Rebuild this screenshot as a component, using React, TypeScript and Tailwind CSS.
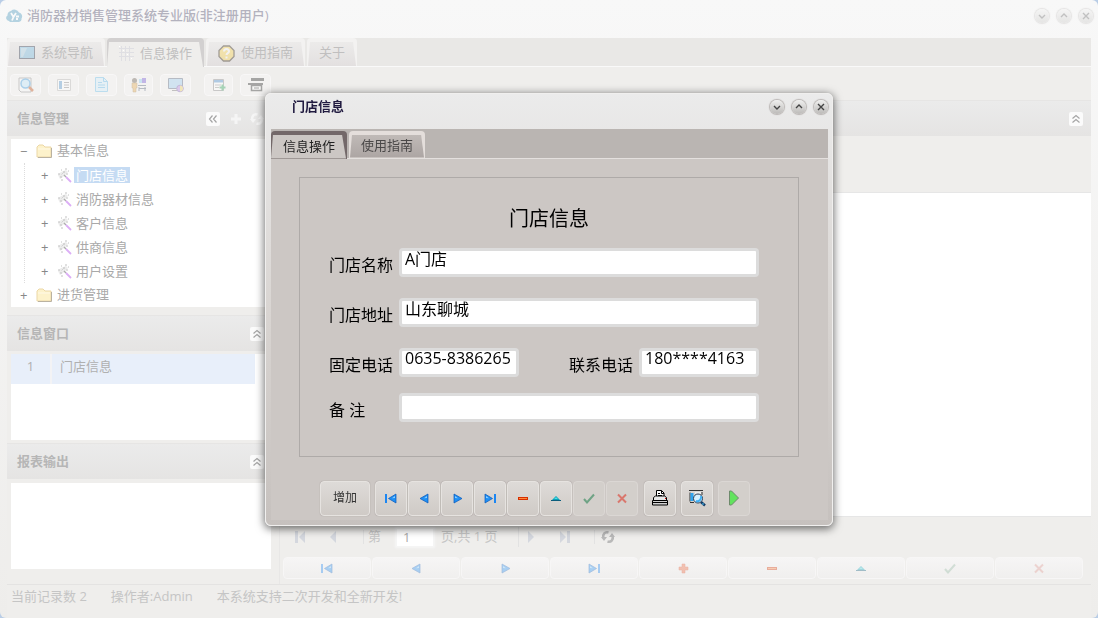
import { type ReactNode } from "react";

/* ================= DATA ================= */

const treeItems = ["门店信息", "消防器材信息", "客户信息", "供商信息", "用户设置"];

type NavIcon = "first" | "prev" | "next" | "last" | "add" | "remove" | "up" | "check" | "cross";

const gridNav: { icon: NavIcon; label: string; off?: boolean }[] = [
  { icon: "first", label: "首条" },
  { icon: "prev", label: "上一条" },
  { icon: "next", label: "下一条" },
  { icon: "last", label: "末条" },
  { icon: "add", label: "添加" },
  { icon: "remove", label: "删除" },
  { icon: "up", label: "编辑" },
  { icon: "check", label: "保存", off: true },
  { icon: "cross", label: "取消", off: true },
];

const dialogNav = gridNav.filter((n) => n.icon !== "add");

/* ================= ICONS ================= */

function NavGlyph({ icon }: { icon: NavIcon }) {
  return (
    <svg width="14" height="14" viewBox="0 0 14 14">
      {icon === "first" && (
        <>
          <path d="M1 3h2v9H1z" fill="#1c86f2" />
          <path d="M12 3v9L4.500 7.500z" fill="#1e8ff5" stroke="#0a58b8" strokeWidth=".7" />
          <path d="M11 5v2L8 7.200z" fill="#8ed0ff" />
        </>
      )}
      {icon === "prev" && (
        <>
          <path d="M11 3v9L3 7.500z" fill="#1e8ff5" stroke="#0a58b8" strokeWidth=".7" />
          <path d="M10 5v2L7 7.200z" fill="#8ed0ff" />
        </>
      )}
      {icon === "next" && (
        <>
          <path d="M4 3v9l8-4.500z" fill="#1e8ff5" stroke="#0a58b8" strokeWidth=".7" />
          <path d="M5 5v2l3 .2z" fill="#8ed0ff" />
        </>
      )}
      {icon === "last" && (
        <>
          <path d="M2 3v9l7.500-4.500z" fill="#1e8ff5" stroke="#0a58b8" strokeWidth=".7" />
          <path d="M3 5v2l3 .2z" fill="#8ed0ff" />
          <path d="M11 3h2v9h-2z" fill="#1c86f2" />
        </>
      )}
      {icon === "add" && <path d="M6 3h3v3h3v3H9v3H6V9H3V6h3z" fill="#f0653a" stroke="#d83a10" strokeWidth=".5" />}
      {icon === "remove" && (
        <>
          <path d="M2 6h10v3H2z" fill="#d62f00" />
          <path d="M3 7h8v1H3z" fill="#ff8a3c" />
        </>
      )}
      {icon === "up" && (
        <>
          <path d="M2 10l5-5 5 5z" fill="#06a2b8" />
          <path d="M2 9.500h10" stroke="#0b5d7c" />
          <path d="M5 8l2-2 2 2z" fill="#4fdbe4" />
        </>
      )}
      {icon === "check" && <path d="M2 8l3 3.500L12 3.500" fill="none" stroke="#6fa385" strokeWidth="2" />}
      {icon === "cross" && <path d="M3 3.500l8 8M11 3.500l-8 8" fill="none" stroke="#d9776d" strokeWidth="2" />}
    </svg>
  );
}

function LogoIcon() {
  return (
    <svg width="17" height="16" viewBox="0 0 17 16" className="opacity-40">
      <path d="M3 13a3 3 0 01-1.500-5.500A4 4 0 015 3a5 5 0 018 1.500 4 4 0 012.500 6A3 3 0 0113 14H4z" fill="#4f9cc0" />
      <path d="M5 5l2.500 4L10 5M7.500 9L6 12.500M10 8.500h3M10 11h2" stroke="#fff" strokeWidth="1.800" fill="none" />
    </svg>
  );
}

function MonitorIcon() {
  return (
    <svg width="16" height="14" viewBox="0 0 16 14" className="opacity-45">
      <rect x=".5" y=".5" width="15" height="12" fill="#8cc8e8" stroke="#4c5566" />
      <path d="M2 2h6l-4 9H2z" fill="#b8dcee" />
    </svg>
  );
}

function GridIcon() {
  return (
    <svg width="15" height="15" viewBox="0 0 15 15">
      <path d="M2.500 0v15M6.500 0v15M10.500 0v15M0 2.500h15M0 6.500h15M0 10.500h15" stroke="#dfdfe3" />
      <path d="M0 0h1v1H0zM4 4h1v1H4zM8 8h1v1H8zM12 12h1v1h-1z" fill="#fff" />
    </svg>
  );
}

function HelpIcon() {
  return (
    <svg width="17" height="17" viewBox="0 0 17 17" className="opacity-45">
      <path d="M5.500 1h6L16 5.500v6L11.500 16h-6L1 11.500v-6z" fill="#fcdc68" stroke="#4d4436" strokeWidth="1.300" />
      <path d="M6 6.500a2.500 2.500 0 115 0c0 1.600-2.500 1.600-2.500 3.500M8.500 11.500v2" stroke="#fff" strokeWidth="2" fill="none" />
    </svg>
  );
}

const toolIcons: { label: string; width: string; art: ReactNode }[] = [
  {
    label: "查找",
    width: "w-[31px]",
    art: (
      <>
        <path d="M1 1h12v14H3l-2-2z" fill="#fafafa" stroke="#8a8a8a" />
        <circle cx="7.500" cy="6.500" r="4.500" fill="#bfe6fb" stroke="#3f9ce0" strokeWidth="1.500" />
        <path d="M11 10l4 4" stroke="#c2551f" strokeWidth="2.500" />
      </>
    ),
  },
  {
    label: "列表",
    width: "w-[31px]",
    art: (
      <>
        <path d="M1.500 2.500h13v11h-13z" fill="#fff" stroke="#b5b5b5" />
        <path d="M3 4h3v8H3z" fill="#5a9ad0" />
        <path d="M8 5.500h5M8 8h5M8 10.500h5" stroke="#8b8b8b" />
      </>
    ),
  },
  {
    label: "文档",
    width: "w-[31px]",
    art: (
      <>
        <path d="M1.500.5h8l4 4v10h-12z" fill="#d5effc" stroke="#6cc0ec" />
        <path d="M9.500.500v4h4M4 5.500h4M4 8h7M4 10.500h7" stroke="#5fb8ea" fill="none" />
      </>
    ),
  },
  {
    label: "人员",
    width: "w-[29px]",
    art: (
      <>
        <circle cx="3.500" cy="3.500" r="2.500" fill="#6d6257" />
        <path d="M1 6h5v5H5v4H2v-4H1z" fill="#e5ae58" stroke="#9c7534" strokeWidth=".5" />
        <path d="M8 2h3v4H8z" fill="#8fcdf0" />
        <path d="M11 1h4v5h-4z" fill="#7a5fd8" />
        <path d="M7 8.500h8M8 11.500h7M8 10v4M14 10v4" stroke="#5a6a80" />
      </>
    ),
  },
  {
    label: "屏幕",
    width: "w-[31px]",
    art: (
      <>
        <path d="M.5 1.500h14v10H.5z" fill="#9fcff0" stroke="#5c6b82" />
        <path d="M4 13.500h6" stroke="#7a7a7a" />
        <circle cx="12" cy="11.500" r="3.300" fill="#b88ae0" stroke="#7c64b4" />
        <path d="M12 8.500a3 3 0 010 6z" fill="#efd56a" />
      </>
    ),
  },
  {
    label: "导出",
    width: "w-[29px]",
    art: (
      <>
        <path d="M2.500 2.500h10v11h-10z" fill="#fff" stroke="#8c8c8c" />
        <path d="M3 3h9v2.500H3z" fill="#4d91cf" />
        <path d="M4 8h6M4 10.500h4" stroke="#999" />
        <path d="M11.500 7.500v6M8.500 10.500h6" stroke="#35a862" strokeWidth="2" />
      </>
    ),
  },
  {
    label: "打印",
    width: "w-[31px]",
    art: (
      <>
        <path d="M3 1h13v3H3zM0 6h15v2H0z" fill="#333" />
        <path d="M3.500 8.500h10v5h-10z" fill="#fff" stroke="#333" strokeWidth="1.500" />
        <path d="M6 11h5" stroke="#333" />
      </>
    ),
  },
];

function FolderIcon() {
  return (
    <svg width="17" height="15" viewBox="0 0 17 15" className="opacity-60">
      <path d="M1 3l2-2h4l2 2h6v10H1z" fill="#fdebaa" stroke="#e0bd6c" />
      <path d="M2 13.500h13.500V4" stroke="#8d8064" fill="none" />
      <path d="M2 5h12" stroke="#fff6d6" />
    </svg>
  );
}

function WandIcon() {
  return (
    <svg width="15" height="15" viewBox="0 0 15 15">
      <path d="M4 4l5-2 2 2-5 5-3 2-2-4z" fill="#ececec" />
      <path d="M4 2h1M8 1h2M11 3h1M1 6h2M3 9h2M4 12h2M6 4h2M9 6h2" stroke="#c2c2c2" />
      <path d="M4.500 6.500l3-3" stroke="#d2d2d2" />
      <path d="M7 7l2 2" stroke="#adadad" strokeWidth="1.500" />
      <path d="M9 9l5 5" stroke="#dcaef6" strokeWidth="1.800" />
    </svg>
  );
}

function ChevronsIcon({ left }: { left?: boolean }) {
  return (
    <svg width="10" height="10" viewBox="0 0 10 10" fill="none" stroke="#a5a5a5" strokeWidth="1.200">
      {left ? <path d="M4.500 1.500L1.500 5l3 3.500M8.500 1.500L5.500 5l3 3.500" /> : <path d="M1.500 4.500L5 1.500l3.500 3M1.500 8.500L5 5.500l3.500 3" />}
    </svg>
  );
}

function RefreshIcon({ color }: { color: string }) {
  return (
    <svg width="14" height="14" viewBox="0 0 14 14" fill="none" stroke={color} strokeWidth="2.600">
      <path d="M7.500 2.500C4 1.500 1.500 4 2.300 8M6.500 11.500c3.500 1 6-1.500 5.200-5.500" />
      <path d="M0 7h6L3 11zM14 7H8l3-4z" fill={color} stroke="none" />
    </svg>
  );
}

/* ================= SHARED PARTS ================= */

function WindowButtons({ faded }: { faded?: boolean }) {
  const paths = [
    { label: "最小化", d: "M4 6l3 3 3-3" },
    { label: "最大化", d: "M4 8l3-3 3 3" },
    { label: "关闭", d: "M4 4l6 6M10 4l-6 6" },
  ];
  return (
    <div className={faded ? "flex gap-2 opacity-30" : "flex gap-2"}>
      {paths.map((p) => (
        <button
          key={p.label}
          type="button"
          aria-label={p.label}
          className="size-3.5 rounded-full bg-linear-to-b from-[#f0f0ef] to-[#bcbab8] shadow-[0_0_1px_1px_#b9b5b3]"
        >
          <svg width="14" height="14" viewBox="0 0 14 14" fill="none" stroke="#444" strokeWidth="1.400">
            <path d={p.d} />
          </svg>
        </button>
      ))}
    </div>
  );
}

function PanelHeader({ title, children }: { title: string; children?: ReactNode }) {
  return (
    <div className="flex h-9 shrink-0 items-center border-t border-[#e6e5e4] bg-linear-to-b from-[#ebebeb] to-[#e5e4e3] pr-2 pl-2.5">
      <h2 className="text-[13px] font-bold text-[#b6b6b6]">{title}</h2>
      <div className="ml-auto flex items-center gap-2">{children}</div>
    </div>
  );
}

function CollapseButton({ left }: { left?: boolean }) {
  return (
    <button type="button" aria-label="折叠" className="flex size-3.5 items-center justify-center rounded-xs bg-[#fbfbfb]">
      <ChevronsIcon left={left} />
    </button>
  );
}

function MainTab({ label, icon, active }: { label: string; icon?: ReactNode; active?: boolean }) {
  return (
    <button
      type="button"
      className={
        active
          ? "relative -mb-px h-[29px] rounded-t bg-[#d2d0d0] px-3"
          : "relative h-7 rounded-t bg-[#f3f2f1] px-3"
      }
    >
      <span
        className={
          active
            ? "absolute inset-0 top-1 bg-[#efeeec] [clip-path:polygon(2px_0,calc(100%-5px)_0,calc(100%-1px)_100%,0_100%)]"
            : "absolute inset-0 top-1 bg-linear-to-b from-[#ecebea] to-[#e3e0e0] [clip-path:polygon(3px_0,calc(100%-4px)_0,calc(100%-1px)_100%,1px_100%)]"
        }
      />
      <span className="relative flex items-center gap-1.5 pt-0.5 text-[13px] text-[#c0bfbf]">
        {icon}
        {label}
      </span>
    </button>
  );
}

function DialogTab({ label, active }: { label: string; active?: boolean }) {
  return (
    <button
      type="button"
      className={
        active
          ? "relative -mb-px h-7 rounded-t bg-[#736869] px-3"
          : "relative h-[27px] rounded-t bg-[#e4dedb] px-3"
      }
    >
      <span
        className={
          active
            ? "absolute inset-0 top-1 bg-[#ccc7c4] [clip-path:polygon(2px_0,calc(100%-5px)_0,calc(100%-1px)_100%,0_100%)]"
            : "absolute inset-0 top-1 bg-linear-to-b from-[#c0bab7] to-[#aca5a3] [clip-path:polygon(3px_0,calc(100%-4px)_0,calc(100%-1px)_100%,1px_100%)]"
        }
      />
      <span className={active ? "relative text-[13px] text-[#222]" : "relative text-[13px] text-[#4a4848]"}>{label}</span>
    </button>
  );
}

function Field({ id, label, value, short }: { id: string; label: string; value?: string; short?: boolean }) {
  return (
    <div className={short ? "flex" : "flex flex-1"}>
      <label htmlFor={id} className="w-[70px] shrink-0 pt-[5px] text-base leading-6 whitespace-pre">
        {label}
      </label>
      <input
        id={id}
        type="text"
        defaultValue={value}
        className={
          short
            ? "h-[29px] w-[120px] rounded border-[3px] border-[#dcdcdc] bg-white px-[3px] pb-[9px] text-base leading-[17px] outline-none"
            : "h-[29px] min-w-0 flex-1 rounded border-[3px] border-[#dcdcdc] bg-white px-[3px] pb-[9px] text-base leading-[17px] outline-none"
        }
      />
    </div>
  );
}

function DialogButton({ label, off, children }: { label: string; off?: boolean; children: ReactNode }) {
  return (
    <button
      type="button"
      aria-label={label}
      className={
        off
          ? "flex h-[35px] w-8 items-center justify-center rounded border border-[#dbd7d4] bg-[#d3cfcb]"
          : "flex h-[35px] w-8 items-center justify-center rounded border border-[#e6e3e0] bg-linear-to-b from-[#dedbd8] to-[#cfcac6] shadow-[0_0_1px_#8f8a87]"
      }
    >
      {children}
    </button>
  );
}

/* ================= SIDEBAR ================= */

function Sidebar() {
  return (
    <aside className="flex w-[268px] shrink-0 flex-col pr-[3px]">
      <PanelHeader title="信息管理">
        <CollapseButton left />
        <button type="button" aria-label="新增" className="ml-0.5 size-3">
          <svg width="12" height="12" viewBox="0 0 12 12">
            <path d="M6 1v10M1 6h10" stroke="#f5f5f5" strokeWidth="3" />
          </svg>
        </button>
        <button type="button" aria-label="刷新">
          <RefreshIcon color="#f5f5f5" />
        </button>
      </PanelHeader>
      <div className="mt-[3px] mr-px ml-1 bg-white text-[13px] text-[#a9a9a9]">
        <ul className="ml-[13px]">
          <li>
            <div className="-ml-1 flex h-6 items-center">
              <span className="w-4 shrink-0 leading-none text-[#888]">−</span>
              <FolderIcon />
              <span className="ml-1">基本信息</span>
            </div>
            <ul className="border-l border-dotted border-[#ddd] pl-4">
              {treeItems.map((item, i) => (
                <li key={item} className="flex h-6 items-center">
                  <span className="w-4 shrink-0 leading-none text-[#888]">+</span>
                  <WandIcon />
                  <span className={i === 0 ? "ml-0.5 bg-[#c5dbf3] px-0.5 leading-4 text-white" : "ml-0.5 px-0.5 leading-4"}>
                    {item}
                  </span>
                </li>
              ))}
            </ul>
          </li>
          <li className="-ml-1 flex h-6 items-center">
            <span className="w-4 shrink-0 leading-none text-[#888]">+</span>
            <FolderIcon />
            <span className="ml-1">进货管理</span>
          </li>
        </ul>
      </div>

      <div className="mt-2">
        <PanelHeader title="信息窗口">
          <CollapseButton />
        </PanelHeader>
      </div>
      <div className="mt-[3px] mr-px ml-1 min-h-[86px] bg-white pr-4">
        <table className="w-full border-collapse text-[13px] text-[#b0b0b0]">
          <tbody>
            <tr className="h-[30px] bg-[#e8effa]">
              <td className="w-10 border-r-2 border-[#f3f3f5] pb-1 text-center">1</td>
              <td className="pb-1 pl-2">门店信息</td>
            </tr>
          </tbody>
        </table>
      </div>

      <div className="mt-[3px]">
        <PanelHeader title="报表输出">
          <CollapseButton />
        </PanelHeader>
      </div>
      <div className="mt-1 mr-px mb-[15px] ml-1 min-h-[84px] flex-1 bg-white" />
    </aside>
  );
}

/* ================= DATA PANEL ================= */

function DataPanel() {
  return (
    <section className="ml-1 flex min-w-0 flex-1 flex-col border-l border-[#e8e7e6]">
      <PanelHeader title="">
        <CollapseButton />
      </PanelHeader>
      <div className="h-14 shrink-0" />
      <div className="flex-1 border-y border-[#e6e6e6] bg-white" />

      <div className="flex h-10 shrink-0 items-center pl-3 text-[13px] text-[#c6c6c6]">
        <button type="button" aria-label="首页" className="w-8">
          <svg width="14" height="14" viewBox="0 0 14 14" fill="#d4d7de"><path d="M3 1h3v12H3zM13 1v12L7 7z" /></svg>
        </button>
        <button type="button" aria-label="上一页" className="w-10 border-r border-[#e2e2e2] pl-1">
          <svg width="14" height="14" viewBox="0 0 14 14" fill="#d4d7de"><path d="M8 1v12L2 7z" /></svg>
        </button>
        <label htmlFor="page" className="pr-4 pl-1">第</label>
        <input id="page" defaultValue="1" className="w-9 bg-white px-1.5 leading-[17px] text-[#aaa] shadow-[0_0_2px_2px_#f6f6f6] outline-none" />
        <span className="ml-2 w-[78px] border-r border-[#e2e2e2]">页,共 1 页</span>
        <button type="button" aria-label="下一页" className="w-8 pl-2">
          <svg width="14" height="14" viewBox="0 0 14 14" fill="#d4d7de"><path d="M1 1v12l6-6z" /></svg>
        </button>
        <button type="button" aria-label="末页" className="w-11 border-r border-[#e2e2e2] pl-2">
          <svg width="14" height="14" viewBox="0 0 14 14" fill="#d4d7de"><path d="M1 1v12l6-6zM8 1h3v12H8z" /></svg>
        </button>
        <button type="button" aria-label="刷新列表" className="ml-1.5">
          <RefreshIcon color="#b9b9b9" />
        </button>
      </div>

      <div className="mr-2 mb-[5px] ml-[3px] grid grid-cols-9 gap-px">
        {gridNav.map((n) => (
          <button
            key={n.icon}
            type="button"
            aria-label={n.label}
            className="flex h-[22px] items-center justify-center rounded border border-[#f7f6f6] bg-linear-to-b from-[#f6f5f5] to-[#f0efee]"
          >
            <span className={n.off ? "opacity-25" : "opacity-35"}>
              <NavGlyph icon={n.icon} />
            </span>
          </button>
        ))}
      </div>
    </section>
  );
}

/* ================= DIALOG ================= */

function StoreDialog() {
  return (
    <div className="fixed inset-0 flex items-center justify-center">
      <div
        role="dialog"
        aria-label="门店信息"
        className="w-full max-w-[568px] rounded-md border border-[#f0efee] bg-linear-to-b from-[#ebebeb] via-[#d9d5d2] to-[#c6c1be] pr-1 pb-[5px] pl-[5px] shadow-[0_2px_8px_1px_rgba(0,0,0,0.55)]"
      >
        <div className="flex h-[35px] items-center pb-2 pl-[21px]">
          <h2 className="text-[13px] font-bold text-[#211b40]">门店信息</h2>
          <div className="ml-auto">
            <WindowButtons />
          </div>
        </div>

        <div className="flex h-[30px] items-end gap-0.5 border-b border-[#e4e0de] bg-[#bab5b2]">
          <DialogTab label="信息操作" active />
          <DialogTab label="使用指南" />
        </div>

        <form className="bg-[#ccc7c4] pt-[18px] pr-[29px] pb-1 pl-7" onSubmit={(e) => e.preventDefault()}>
          <div className="border border-[#aeaaa8] pt-[27px] pr-[39px] pb-[34px] pl-[29px] text-black">
            <h3 className="mb-[15px] pl-2.5 text-center text-xl leading-7">门店信息</h3>
            <div className="mb-[21px] flex">
              <Field id="name" label="门店名称" value="A门店" />
            </div>
            <div className="mb-[21px] flex">
              <Field id="address" label="门店地址" value="山东聊城" />
            </div>
            <div className="mb-4 flex justify-between">
              <Field id="tel" label="固定电话" value="0635-8386265" short />
              <Field id="mobile" label="联系电话" value="180****4163" short />
            </div>
            <div className="flex">
              <Field id="memo" label="备 注" />
            </div>
          </div>

          <div className="mt-6 flex gap-[5px] pl-[21px]">
            <button
              type="button"
              className="h-[35px] w-[50px] rounded border border-[#e6e3e0] bg-linear-to-b from-[#dedbd8] to-[#cfcac6] text-xs text-[#333] shadow-[0_0_1px_#8f8a87]"
            >
              增加
            </button>
            <div className="mr-px flex gap-px">
              {dialogNav.map((n) => (
                <DialogButton key={n.icon} label={n.label} off={n.off}>
                  <NavGlyph icon={n.icon} />
                </DialogButton>
              ))}
            </div>
            <DialogButton label="打印">
              <svg width="16" height="16" viewBox="0 0 16 16">
                <path d="M4.500 7V.5h5l2.500 2.500v4" fill="#fff" stroke="#000" />
                <path d="M9.500.5v3H12M6 3.500h2M6 5.500h4" stroke="#000" fill="none" />
                <path d="M1.500 7.500L3.500 6h9l2 1.500v3h-13z" fill="#e8e8e8" stroke="#000" />
                <path d="M.5 10.500h15v4.500H.5z" fill="#d0d0d0" stroke="#000" />
                <path d="M1 12.500h14" stroke="#000" />
                <path d="M13 8.500h1" stroke="#d00" />
              </svg>
            </DialogButton>
            <DialogButton label="预览">
              <svg width="18" height="18" viewBox="0 0 18 18">
                <path d="M1 1.500h14M2 3.500v9M14 3v3M2 13.500h4" stroke="#333" />
                <path d="M2.500 4h3v8h-3z" fill="#2fa4f0" />
                <path d="M7 4h6" stroke="#eee" strokeWidth="2" />
                <circle cx="10" cy="9.500" r="4.500" fill="#d5f0ff" stroke="#2a3d55" />
                <path d="M8 12a4 4 0 005-5" stroke="#3fb0f5" strokeWidth="2" fill="none" />
                <path d="M13 13l4 3.500" stroke="#123c66" strokeWidth="2.500" />
                <path d="M14.500 14.500l1 1" stroke="#4fc3f7" strokeWidth="1.500" />
              </svg>
            </DialogButton>
            <DialogButton label="运行" off>
              <svg width="12" height="16" viewBox="0 0 12 16">
                <path d="M1.500 1v14h2l7-7-7-7z" fill="#62e35e" stroke="#6d8a6b" />
              </svg>
            </DialogButton>
          </div>
        </form>
      </div>
    </div>
  );
}

/* ================= PAGE ================= */

export default function App() {
  return (
    <div className="min-h-screen bg-[#b9cde6] font-['Open_Sans','Noto_Sans_CJK_SC',sans-serif]">
      <div className="flex min-h-screen flex-col rounded-md bg-linear-to-b from-[#f8f8f8] to-[#eeedeb]">
        <header className="flex h-[38px] shrink-0 items-center gap-1 pr-[5px] pb-1.5 pl-1.5">
          <LogoIcon />
          <h1 className="text-[13px] font-medium text-[#b3b2be]">消防器材销售管理系统专业版(非注册用户)</h1>
          <div className="ml-auto">
            <WindowButtons faded />
          </div>
        </header>

        <div className="mx-[7px] flex flex-1 flex-col bg-[#efeeec]">
          <nav className="flex h-[29px] items-end gap-0.5 border-b border-[#f9f9f9] bg-[#e9e8e6]">
            <MainTab label="系统导航" icon={<MonitorIcon />} />
            <MainTab label="信息操作" icon={<GridIcon />} active />
            <MainTab label="使用指南" icon={<HelpIcon />} />
            <MainTab label="关于" />
          </nav>

          <div className="flex h-[33px] shrink-0 items-end gap-[7px] pb-1 pl-[3px]">
            {toolIcons.map((t, i) => (
              <div key={t.label} className={i === 5 ? "ml-1.5" : ""}>
                <button
                  type="button"
                  aria-label={t.label}
                  className={`${t.width} flex h-[22px] items-center justify-center rounded border border-[#f8f7f7] bg-[#f3f2f1]`}
                >
                  <svg width="16" height="16" viewBox="0 0 16 16" className="opacity-40">
                    {t.art}
                  </svg>
                </button>
              </div>
            ))}
          </div>

          <main className="flex min-w-0 flex-1">
            <Sidebar />
            <DataPanel />
          </main>

          <footer className="flex h-[34px] shrink-0 items-start gap-6 border-t border-[#e4e3e2] pt-0.5 pl-1 text-[13px] text-[#c5c5c5]">
            <span>当前记录数 2</span>
            <span>操作者:Admin</span>
            <span>本系统支持二次开发和全新开发!</span>
          </footer>
        </div>
      </div>

      <StoreDialog />
    </div>
  );
}
